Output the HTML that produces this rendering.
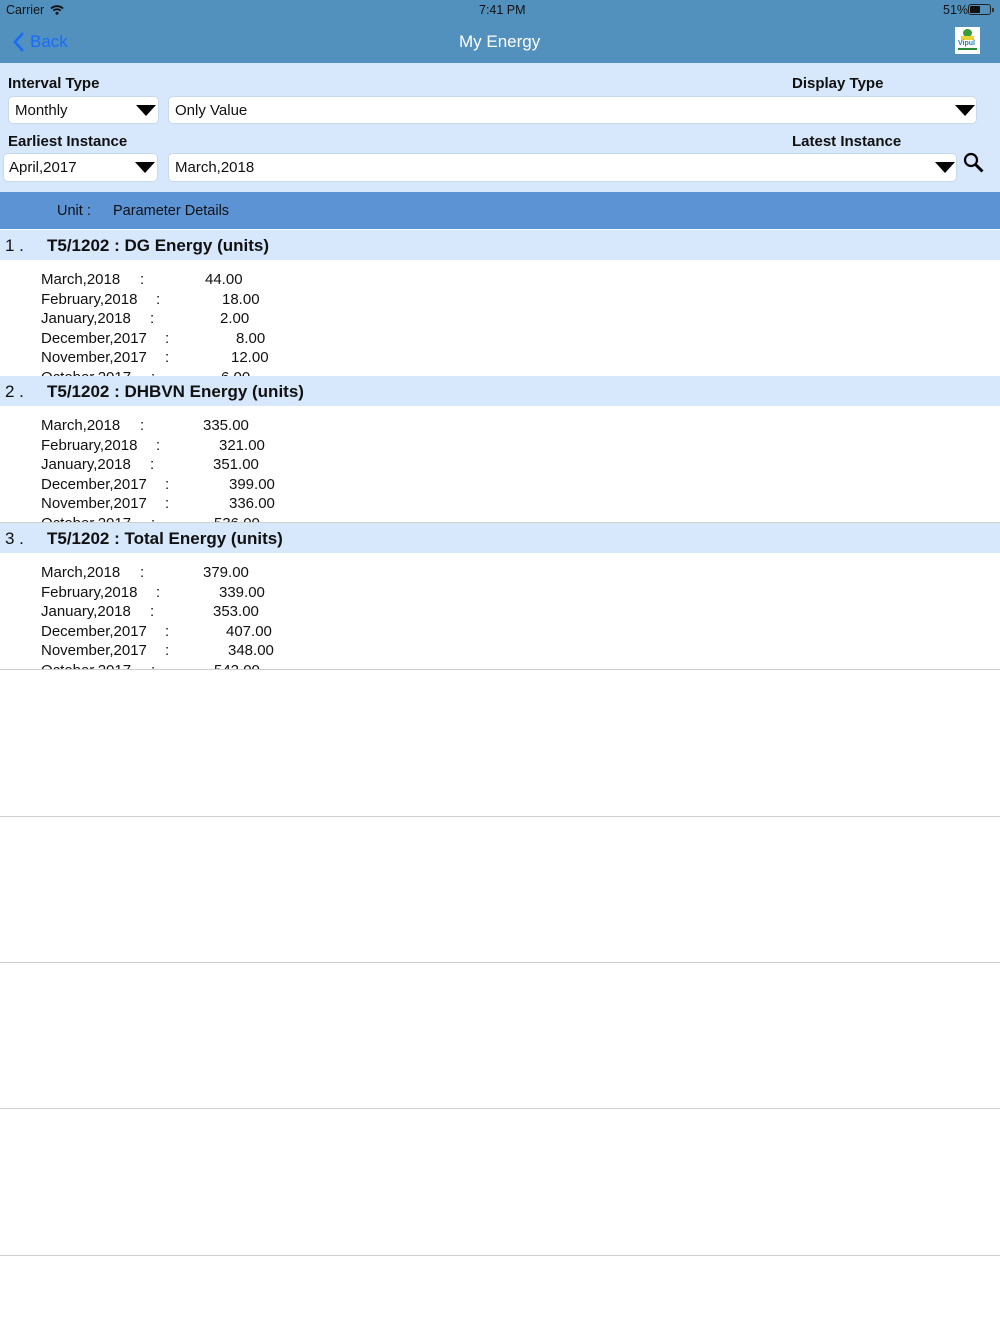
<!DOCTYPE html>
<html><head><meta charset="utf-8"><style>
*{margin:0;padding:0;box-sizing:border-box}
body{width:1000px;height:1334px;background:#fff;font-family:"Liberation Sans",Arial,sans-serif;position:relative;overflow:hidden;color:#111}
.a{position:absolute;white-space:nowrap}
.nav{position:absolute;left:0;top:0;width:1000px;height:63px;background:#5291be}
.filt{position:absolute;left:0;top:63px;width:1000px;height:129px;background:#d7e7fc}
.lbl{font-weight:bold;font-size:15px;color:#111}
.box{position:absolute;background:#fff;border:1px solid #c9d9ec;border-radius:5px;font-size:15px;padding-left:6px;display:flex;align-items:center}
.tri{position:absolute;width:0;height:0;border-left:10px solid transparent;border-right:10px solid transparent;border-top:11px solid #000}
.unit{position:absolute;left:0;top:192px;width:1000px;height:37px;background:#5b93d5;font-size:14.5px}
.sec{position:absolute;left:0;width:1000px;height:147px;overflow:hidden;border-bottom:1px solid #cfcfcf}
.hd{position:absolute;left:0;top:0;width:1000px;height:30px;background:#d7e7fc;font-size:17px;font-weight:bold}
.r{position:absolute;font-size:15px;white-space:nowrap;line-height:18px;margin-top:2px}
.line{position:absolute;left:0;width:1000px;height:1px;background:#cfcfcf}
</style></head><body>
<div class="nav">
 <div class="a" style="left:6px;top:3px;font-size:12.5px;color:#111">Carrier</div>
 <svg class="a" style="left:50px;top:4px" width="14" height="11" viewBox="0 0 14 11"><path d="M1 4.5A9 9 0 0 1 13 4.5" stroke="#111" stroke-width="1.8" fill="none"/><path d="M3.3 6.6A5.7 5.7 0 0 1 10.7 6.6" stroke="#111" stroke-width="1.8" fill="none"/><circle cx="7" cy="9.3" r="1.5" fill="#111"/></svg>
 <div class="a" style="left:479px;top:3px;font-size:12.5px;color:#111">7:41 PM</div>
 <div class="a" style="left:943px;top:3px;font-size:12.5px;color:#111">51%</div>
 <div class="a" style="left:968px;top:4px;width:23px;height:11px;border:1px solid #222;border-radius:3px"><div style="width:10px;height:7px;margin:1px;background:#111;border-radius:1px"></div></div>
 <div class="a" style="left:992px;top:8px;width:2px;height:4px;background:#333"></div>
 <svg class="a" style="left:12px;top:31px" width="14" height="22" viewBox="0 0 14 22"><path d="M11 2L3 11L11 20" stroke="#1a6cf5" stroke-width="2.6" fill="none"/></svg>
 <div class="a" style="left:30px;top:32px;font-size:17px;color:#1a6cf5">Back</div>
 <div class="a" style="left:459px;top:32px;font-size:17px;color:#fff">My Energy</div>
 <div class="a" style="left:955px;top:27px;width:25px;height:27px;background:#fff">
  <div style="position:absolute;left:8px;top:2px;width:9px;height:8px;background:#3a9b3a;border-radius:50%"></div>
  <div style="position:absolute;left:6px;top:9px;width:13px;height:4px;background:#e8d23a"></div>
  <div style="position:absolute;left:3px;top:13px;font-size:7px;font-weight:bold;color:#1c7fbf">Vipul</div>
  <div style="position:absolute;left:3px;top:21px;width:19px;height:2px;background:#2a8a3a"></div>
 </div>
</div>
<div class="filt">
 <div class="a lbl" style="left:8px;top:12px">Interval Type</div>
 <div class="a lbl" style="left:792px;top:12px">Display Type</div>
 <div class="a lbl" style="left:8px;top:70px">Earliest Instance</div>
 <div class="a lbl" style="left:792px;top:70px">Latest Instance</div>
</div>
<div class="box" style="left:8px;top:96px;width:151px;height:28px">Monthly</div><div class="tri" style="left:136px;top:105px"></div>
<div class="box" style="left:168px;top:96px;width:809px;height:28px">Only Value</div><div class="tri" style="left:955px;top:105px"></div>
<div class="box" style="left:3px;top:153px;width:155px;height:29px;padding-left:5px">April,2017</div><div class="tri" style="left:135px;top:162px"></div>
<div class="box" style="left:168px;top:153px;width:789px;height:29px">March,2018</div><div class="tri" style="left:935px;top:162px"></div>
<svg class="a" style="left:963px;top:152px" width="22" height="22" viewBox="0 0 22 22"><circle cx="8" cy="8" r="6" stroke="#000" stroke-width="2.2" fill="none"/><path d="M12.5 12.5L19.5 19.5" stroke="#000" stroke-width="3"/></svg>
<div class="unit"><div class="a" style="left:57px;top:11px">Unit :</div><div class="a" style="left:113px;top:11px">Parameter Details</div></div>

<div class="sec" style="top:230px">
 <div class="hd"><span class="a" style="left:5px;top:6px;font-weight:normal">1 .</span><span class="a" style="left:47px;top:6px">T5/1202 : DG Energy (units)</span></div>
 <div class="r" style="left:41px;top:39px">March,2018</div><div class="r" style="left:140px;top:39px">:</div><div class="r" style="left:205px;top:39px">44.00</div>
 <div class="r" style="left:41px;top:59px">February,2018</div><div class="r" style="left:156px;top:59px">:</div><div class="r" style="left:222px;top:59px">18.00</div>
 <div class="r" style="left:41px;top:78px">January,2018</div><div class="r" style="left:150px;top:78px">:</div><div class="r" style="left:220px;top:78px">2.00</div>
 <div class="r" style="left:41px;top:98px">December,2017</div><div class="r" style="left:165px;top:98px">:</div><div class="r" style="left:236px;top:98px">8.00</div>
 <div class="r" style="left:41px;top:117px">November,2017</div><div class="r" style="left:165px;top:117px">:</div><div class="r" style="left:231px;top:117px">12.00</div>
 <div class="r" style="left:41px;top:137px">October,2017</div><div class="r" style="left:151px;top:137px">:</div><div class="r" style="left:221px;top:137px">6.00</div>
</div>
<div class="sec" style="top:376px">
 <div class="hd"><span class="a" style="left:5px;top:6px;font-weight:normal">2 .</span><span class="a" style="left:47px;top:6px">T5/1202 : DHBVN Energy (units)</span></div>
 <div class="r" style="left:41px;top:39px">March,2018</div><div class="r" style="left:140px;top:39px">:</div><div class="r" style="left:203px;top:39px">335.00</div>
 <div class="r" style="left:41px;top:59px">February,2018</div><div class="r" style="left:156px;top:59px">:</div><div class="r" style="left:219px;top:59px">321.00</div>
 <div class="r" style="left:41px;top:78px">January,2018</div><div class="r" style="left:150px;top:78px">:</div><div class="r" style="left:213px;top:78px">351.00</div>
 <div class="r" style="left:41px;top:98px">December,2017</div><div class="r" style="left:165px;top:98px">:</div><div class="r" style="left:229px;top:98px">399.00</div>
 <div class="r" style="left:41px;top:117px">November,2017</div><div class="r" style="left:165px;top:117px">:</div><div class="r" style="left:229px;top:117px">336.00</div>
 <div class="r" style="left:41px;top:137px">October,2017</div><div class="r" style="left:151px;top:137px">:</div><div class="r" style="left:214px;top:137px">536.00</div>
</div>
<div class="sec" style="top:523px">
 <div class="hd"><span class="a" style="left:5px;top:6px;font-weight:normal">3 .</span><span class="a" style="left:47px;top:6px">T5/1202 : Total Energy (units)</span></div>
 <div class="r" style="left:41px;top:39px">March,2018</div><div class="r" style="left:140px;top:39px">:</div><div class="r" style="left:203px;top:39px">379.00</div>
 <div class="r" style="left:41px;top:59px">February,2018</div><div class="r" style="left:156px;top:59px">:</div><div class="r" style="left:219px;top:59px">339.00</div>
 <div class="r" style="left:41px;top:78px">January,2018</div><div class="r" style="left:150px;top:78px">:</div><div class="r" style="left:213px;top:78px">353.00</div>
 <div class="r" style="left:41px;top:98px">December,2017</div><div class="r" style="left:165px;top:98px">:</div><div class="r" style="left:226px;top:98px">407.00</div>
 <div class="r" style="left:41px;top:117px">November,2017</div><div class="r" style="left:165px;top:117px">:</div><div class="r" style="left:228px;top:117px">348.00</div>
 <div class="r" style="left:41px;top:137px">October,2017</div><div class="r" style="left:151px;top:137px">:</div><div class="r" style="left:214px;top:137px">542.00</div>
</div>
<div class="line" style="top:816px"></div>
<div class="line" style="top:962px"></div>
<div class="line" style="top:1108px"></div>
<div class="line" style="top:1255px"></div>
</body></html>
